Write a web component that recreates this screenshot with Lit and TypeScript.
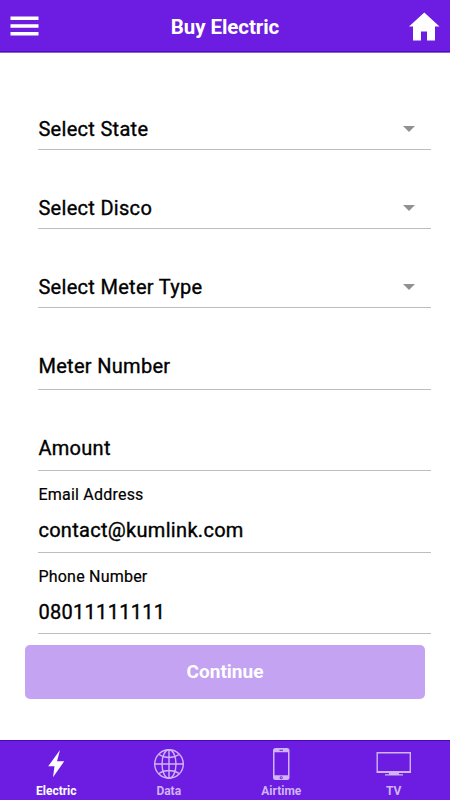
import { LitElement, html, css, svg } from "lit";
import { customElement } from "lit/decorators.js";

interface Field { label: string; value?: string; select?: boolean; cls: string }
const fields: Field[] = [
  { label: "Select State", select: true, cls: "first" },
  { label: "Select Disco", select: true, cls: "select" },
  { label: "Select Meter Type", select: true, cls: "select" },
  { label: "Meter Number", cls: "input raised" },
  { label: "Amount", cls: "input short" },
  { label: "Email Address", value: "contact@kumlink.com", cls: "input" },
  { label: "Phone Number", value: "08011111111", cls: "input short last" },
];

const bolt = svg`<svg width="36" height="32" viewBox="0 0 36 32"><path fill="currentColor" d="M22 2 10.200 18.300h6.300L15 29.300l11.200-16h-7.200z"/></svg>`;
const globe = svg`<svg width="36" height="32" viewBox="0 0 36 32"><g fill="none" stroke="currentColor" stroke-width="1.400"><circle cx="18" cy="16" r="14.300"/><ellipse cx="18" cy="16" rx="7" ry="14.300"/><path d="M18 2v28M4 16h28M8 6.500c5.500 4 14.500 4 20 0M8 25.500c5.500-4 14.500-4 20 0"/></g></svg>`;
const phone = svg`<svg width="36" height="32" viewBox="0 0 36 32"><path fill="currentColor" fill-rule="evenodd" d="M12.500 0h11.500a2.500 2.500 0 0 1 2.500 2.500v27a2.500 2.500 0 0 1-2.500 2.500h-11.500a2.500 2.500 0 0 1-2.500-2.500v-27a2.500 2.500 0 0 1 2.500-2.500zM11.500 4.200v23.100h13.500V4.200zM16.500 1.800v.9h3.500v-.9zM18.200 28.200a1.500 1.500 0 1 0 .01 0z"/><circle cx="18.200" cy="29.700" r=".7" fill="currentColor"/></svg>`;
const tv = svg`<svg width="36" height="32" viewBox="0 0 36 32"><path fill="currentColor" fill-rule="evenodd" d="M.5 4H35v21H.5zM1.900 5.400v17.700h31.700V5.400z"/><path fill="currentColor" d="M13 25h10v1.200h4V27.500H9v-1.300h4z"/></svg>`;

@customElement("app-root")
export class AppRoot extends LitElement {
  static styles = css`
    :host { display: flex; flex-direction: column; height: 800px; background: #fff; color: #000; font-family: Roboto, sans-serif; overflow: hidden; }
    * { box-sizing: border-box; }
    svg { display: block; }
    header { height: 53px; flex: none; display: grid; grid-template-columns: 50px 1fr 50px; align-items: center; background: #6d1ce1; color: #fff; border-bottom: 1px solid #8d67c4; box-shadow: inset 0 -1px #5108c4; }
    h1 { margin: 0; padding-top: 1px; text-align: center; font-size: 20.500px; font-weight: 700; line-height: 24px; letter-spacing: -0.080px; }
    main { flex: 1; padding: 52px 19px 0 38.400px; }
    .field { display: flex; flex-direction: column; justify-content: flex-end; height: 82px; padding-bottom: 10px; border-bottom: 1px solid #bdbdbf; }
    .first { height: 45px; padding-bottom: 8px; }
    .select { height: 79px; padding-bottom: 8px; }
    .short { height: 81px; }
    .raised { padding-bottom: 11px; }
    .last { padding-bottom: 9px; }
    .row { display: flex; justify-content: space-between; align-items: center; font-size: 20px; line-height: 24px; font-weight: 400; letter-spacing: 0.300px; -webkit-text-stroke: 0.350px #000; white-space: nowrap; }
    .caption { font-size: 16px; line-height: 20px; font-weight: 400; letter-spacing: 0.220px; -webkit-text-stroke: 0.200px #000; margin-bottom: 13px; }
    .arrow { margin-right: 16px; }
    .button { display: block; width: 400px; height: 54px; margin: 11px 0 0 -13.400px; padding: 0 0 1px; border: 0; border-radius: 5px; background: #c4a3f3; color: #fff; font: 700 19px/24px Roboto, sans-serif; }
    nav { height: 60px; flex: none; display: grid; grid-template-columns: repeat(4, 1fr); background: #6d1ce1; box-shadow: inset 0 1px #4b07b9; }
    .tab { display: flex; flex-direction: column; align-items: center; padding-top: 8px; color: #d0b4f5; font-size: 12px; line-height: 14px; font-weight: 700; gap: 4px; }
    .active { color: #fff; }
  `;
  render() {
    const tabs = [["Electric", bolt], ["Data", globe], ["Airtime", phone], ["TV", tv]] as const;
    return html`
      <header>
        <svg width="50" height="51" viewBox="0 0 50 51"><path d="M10.500 17.200h28M10.500 25h28M10.500 32.700h28" stroke="#fff" stroke-width="3.600"/></svg>
        <h1>Buy Electric</h1>
        <svg width="50" height="51" viewBox="0 0 50 51"><path fill="#fff" d="M24.300 11.500 9 25.500h4v14h8v-9h6v9h8v-14h4.500z"/></svg>
      </header>
      <main>
        ${fields.map(f => html`<div class="field ${f.cls}">
          ${f.value ? html`<div class="caption">${f.label}</div>` : ""}
          <div class="row"><span>${f.value ?? f.label}</span>${f.select ? html`<svg class="arrow" width="12" height="6" viewBox="0 0 12 6"><path fill="#919191" d="M0 0h12L6 6z"/></svg>` : ""}</div>
        </div>`)}
        <button class="button">Continue</button>
      </main>
      <nav>${tabs.map(([name, icon], i) => html`<div class="tab ${i === 0 ? "active" : ""}">${icon}<span>${name}</span></div>`)}</nav>`;
  }
}
